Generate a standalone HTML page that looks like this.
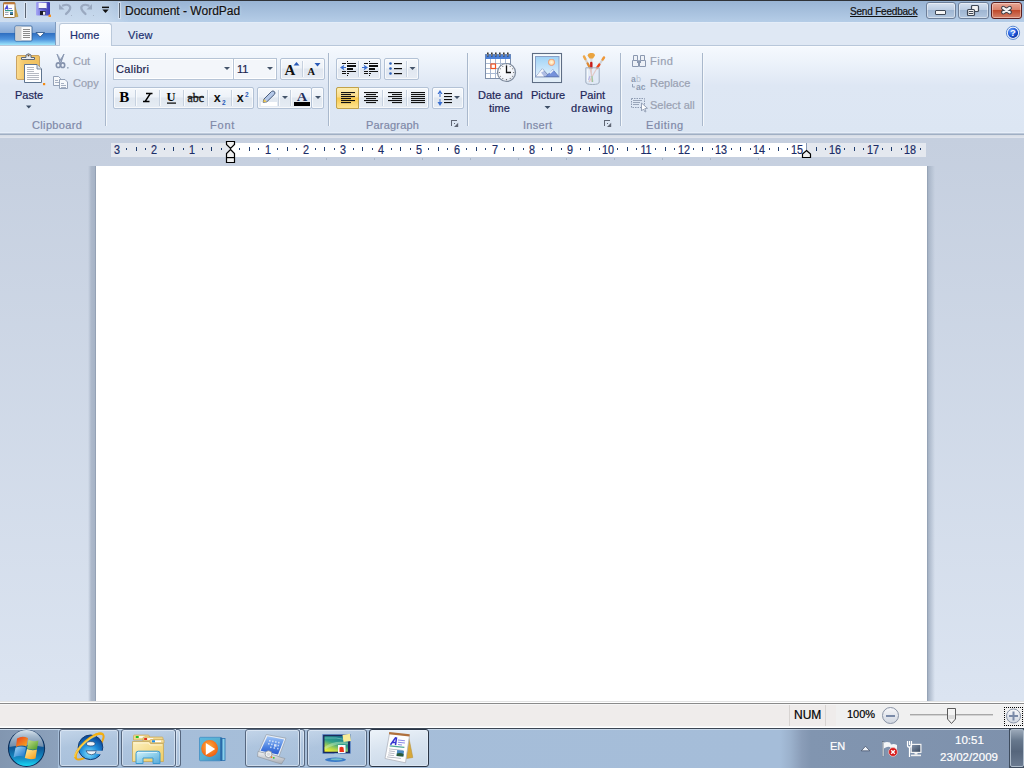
<!DOCTYPE html>
<html><head><meta charset="utf-8">
<style>
*{margin:0;padding:0;box-sizing:border-box}
html,body{width:1024px;height:768px;overflow:hidden;background:#c5cfdf;font-family:"Liberation Sans",sans-serif;font-size:11px;color:#1d2658}
.a{position:absolute}
svg{position:absolute;overflow:visible}
.t{position:absolute;white-space:pre;line-height:13px;-webkit-text-stroke:.2px currentColor}
#title{left:0;top:0;width:1024px;height:22px;background:linear-gradient(#99b4d4,#b5cde7);border-top:1px solid #2f3237}
#qat{left:0;top:1px;width:130px;height:21px;background:linear-gradient(90deg,rgba(215,228,243,.75) 0%,rgba(215,228,243,.55) 80%,rgba(215,228,243,0) 100%)}
#tabs{left:0;top:22px;width:1024px;height:24px;background:#dfe8f4;border-top:1px solid #e4edf8;border-bottom:1px solid #b8c7da}
#ribbon{left:0;top:46px;width:1024px;height:87px;background:linear-gradient(#ffffff 0px,#f5f9fe 1px,#e9f0f9 22px,#dee7f4 40px,#dce6f3 100%)}
#rb1{left:0;top:132px;width:1024px;height:1px;background:#e6eef9}
#rb2{left:0;top:133px;width:1024px;height:1px;background:#bcc8d9}
#rb3{left:0;top:134px;width:1024px;height:1px;background:#a0afc4}
#rsep{left:0;top:135px;width:1024px;height:3px;background:linear-gradient(#d5dbe4,#e1e6ef)}
#docbg{left:0;top:138px;width:1024px;height:563px;background:linear-gradient(#c5cfdf,#dbe4f1)}
#ruler{left:111px;top:143px;width:815px;height:14px;background:#e4e8ef}
#rwhite{left:230px;top:143px;width:576px;height:14px;background:#fff}
#page{left:96px;top:166px;width:831px;height:535px;background:#fff}
#shl{left:88px;top:166px;width:8px;height:535px;background:linear-gradient(90deg,rgba(160,175,195,0),#adb9cb 40%,#a6b3c6 85%,#8794a7)}
#shr{left:927px;top:166px;width:8px;height:535px;background:linear-gradient(90deg,#8d9bae,#a9b6c8 20%,rgba(160,175,195,0))}
#status{left:0;top:701px;width:1024px;height:28px;background:#efeceb}
#task{left:0;top:729px;width:1024px;height:39px;background:linear-gradient(90deg,#a5bdd8 0%,#a5bdd8 75%,#7e95b1 84%,#7a91ad 100%)}
.sep{position:absolute;width:1px;background:#a9b8cc;box-shadow:1px 0 0 #f4f8fc}
.lbl{color:#7f89a8}
.dis{color:#9aa1b2}
.grp{position:absolute;border:1px solid #b3c2d6;border-radius:2px;background:linear-gradient(#f5f8fc 0%,#edf2f8 45%,#e0e7f0 50%,#e6ecf4 100%);box-shadow:inset 0 0 0 1px rgba(255,255,255,.65)}
.cb{position:absolute;border:1px solid #b6c4d6;background:#f3f6fa}
.dv{position:absolute;top:2px;bottom:2px;width:1px;background:#c6d1df;box-shadow:1px 0 0 rgba(255,255,255,.7)}
.rn{width:30px;text-align:center;color:#1b2d68;font-size:12px;transform:scaleX(.9)}
.arr{position:absolute;width:0;height:0;border-left:3px solid transparent;border-right:3px solid transparent;border-top:3px solid #44546a}
</style></head><body>
<div id="title" class="a"></div>
<div id="qat" class="a"></div>
<!-- wordpad icon -->
<svg style="left:0;top:0" width="24" height="22">
 <path d="M14.5 5 L18 16.5 L14.5 17 Z" fill="#d6a840" stroke="#b08a30" stroke-width=".6"/>
 <rect x="3.5" y="2.5" width="11.5" height="15" rx="1" fill="#fff" stroke="#9a7a48"/>
 <rect x="3.5" y="2.5" width="11.5" height="1.8" fill="#c27a3c"/>
 <path d="M5 9.5 L7 6 L8 9.5 M5.5 8.3 H8" stroke="#4c4cd6" stroke-width="1.4" fill="none"/>
 <rect x="9" y="8" width="3" height="1" fill="#8a8ae0"/>
 <rect x="5" y="10" width="8" height="1.2" fill="#3a9a8a"/>
 <rect x="5" y="12" width="3.5" height="1" fill="#a0a4b8"/>
 <rect x="5" y="14" width="3.5" height="1" fill="#a0a4b8"/>
 <rect x="10" y="12" width="3" height="3" fill="#3f7fb0"/>
 <rect x="10" y="14" width="3" height="1" fill="#2f4f40"/>
</svg>
<div class="a" style="left:25px;top:3px;width:1px;height:15px;background:#5a6472;box-shadow:0 0 1px 1px rgba(235,242,250,.6)"></div>
<!-- save -->
<svg style="left:0;top:0" width="60" height="22">
 <defs><linearGradient id="sv" x1="0" x2="1"><stop offset="0" stop-color="#a8a8f4"/><stop offset=".5" stop-color="#6666d8"/><stop offset="1" stop-color="#3c3cb4"/></linearGradient></defs>
 <rect x="36" y="2" width="14" height="13.6" rx="1" fill="url(#sv)"/>
 <rect x="38.6" y="2.8" width="8" height="6" fill="#f4f6fa"/>
 <rect x="38.6" y="8.2" width="8" height="1" fill="#3838a0"/>
 <rect x="40" y="11" width="5.5" height="4" fill="#1a1a2a"/>
 <rect x="43" y="11.8" width="2.2" height="3" fill="#f0f0f0"/>
 <rect x="48.5" y="14.5" width="2.5" height="2.5" rx=".6" fill="#f39020"/>
</svg>
<!-- undo / redo -->
<svg style="left:0;top:0" width="100" height="22">
 <g fill="none" stroke="#9aa9c0" stroke-width="2.2" stroke-linecap="round">
  <path d="M63 5.5 C68 3.5 71 6 70 9 C69 11.5 67 13 66 14"/>
  <path d="M88.5 5.5 C83.5 3.5 80.5 6 81.5 9 C82.5 11.5 84.5 13 85.5 14"/>
 </g>
 <path d="M59 4 L59 9.5 L64.5 9.5 Z" fill="#9aa9c0"/>
 <path d="M92 4 L92 9.5 L86.5 9.5 Z" fill="#9aa9c0"/>
 <rect x="71" y="15" width="1" height="1" fill="#a8b6c8"/>
 <rect x="93" y="15" width="1" height="1" fill="#a8b6c8"/>
</svg>
<svg style="left:100px;top:0" width="12" height="22">
 <rect x="2" y="6.6" width="7" height="1.5" fill="#111"/>
 <path d="M2.3 9.6 H8.7 L5.5 13 Z" fill="#111"/>
</svg>
<div class="a" style="left:119px;top:3px;width:1px;height:15px;background:#5a6472;box-shadow:0 0 1px 1px rgba(235,242,250,.6)"></div>
<div class="t" style="left:125px;top:4px;font-size:12px;line-height:14px;color:#111;text-shadow:0 0 3px rgba(235,242,250,.8)">Document - WordPad</div>
<div class="t" style="left:850px;top:5px;font-size:10px;color:#111;letter-spacing:-.2px;text-decoration:underline">Send Feedback</div>
<!-- window buttons -->
<div class="a" style="left:926px;top:2px;width:30px;height:17px;border:1px solid #6d7f99;border-radius:3px;background:linear-gradient(#d5e1f0 0%,#bccde3 45%,#9fb6d2 50%,#b3c7df 100%);box-shadow:inset 0 0 0 1px rgba(255,255,255,.45)"></div>
<div class="a" style="left:935px;top:10px;width:11px;height:5px;background:#f4f4f4;border:1px solid #3f4856;border-radius:1px"></div>
<div class="a" style="left:958px;top:2px;width:31px;height:17px;border:1px solid #6d7f99;border-radius:3px;background:linear-gradient(#d5e1f0 0%,#bccde3 45%,#9fb6d2 50%,#b3c7df 100%);box-shadow:inset 0 0 0 1px rgba(255,255,255,.45)"></div>
<svg style="left:966px;top:4px" width="16" height="14">
 <rect x="5.5" y="1.5" width="7" height="6" rx="1" fill="#f2f2f2" stroke="#3f4856" stroke-width="1.2"/>
 <rect x="1.5" y="5.5" width="7" height="6" rx="1" fill="#f2f2f2" stroke="#3f4856" stroke-width="1.2"/>
 <rect x="3.3" y="7.5" width="3.4" height="2" fill="none" stroke="#3f4856" stroke-width="1"/>
</svg>
<div class="a" style="left:991px;top:2px;width:31px;height:17px;border:1px solid #5c1e1e;border-radius:3px;background:linear-gradient(#e8a796 0%,#d9826c 45%,#c04a2c 50%,#d4826a 100%);box-shadow:inset 0 0 0 1px rgba(255,230,220,.5)"></div>
<svg style="left:999px;top:4px" width="16" height="14">
 <path d="M4.3 4 L10.7 8.2 M10.7 4 L4.3 8.2" stroke="#3b3e48" stroke-width="4.4" stroke-linecap="round"/>
 <path d="M4.3 4 L10.7 8.2 M10.7 4 L4.3 8.2" stroke="#f4f4f4" stroke-width="2.4" stroke-linecap="round"/>
</svg>

<div id="tabs" class="a"></div>
<!-- app button -->
<div class="a" style="left:0;top:22px;width:56px;height:23px;border-right:1px solid #7f9cc0;background:linear-gradient(#b0cbec 0%,#86a9d6 48%,#3070c2 50%,#4d93de 75%,#9ee6fb 100%)"></div>
<svg style="left:0;top:20px" width="56" height="26">
 <rect x="15" y="6" width="17" height="15" rx="1" fill="#fafafa" stroke="#2a5890" stroke-width=".8"/>
 <rect x="15.5" y="6.5" width="6" height="14" fill="#d0d0d0"/>
 <g fill="#8a8a8a"><rect x="23" y="9" width="7" height="1"/><rect x="23" y="11" width="7" height="1"/><rect x="23" y="13" width="7" height="1"/><rect x="23" y="15" width="7" height="1"/><rect x="23" y="17" width="7" height="1"/></g>
 <path d="M36 12.5 H44.5 L40.2 17 Z" fill="#fff" stroke="#1f4a80" stroke-width=".8"/>
</svg>
<!-- home tab -->
<div class="a" style="left:59px;top:23px;width:53px;height:24px;border:1px solid #bac9db;border-bottom:none;border-radius:3px 3px 0 0;background:linear-gradient(#fdfeff,#f5f9fe)"></div>
<div class="t" style="left:70px;top:29px;color:#1e3272">Home</div>
<div class="t" style="left:128px;top:29px;color:#1e3272;letter-spacing:.3px">View</div>
<!-- help -->
<svg style="left:1004px;top:24px" width="18" height="18">
 <defs><radialGradient id="hp" cx=".35" cy=".3" r=".8"><stop offset="0" stop-color="#6aa0ff"/><stop offset=".6" stop-color="#1a55d8"/><stop offset="1" stop-color="#0a2a90"/></radialGradient></defs>
 <circle cx="9" cy="8.8" r="6.6" fill="#f4f8fd" stroke="#5a88d0" stroke-width="1"/>
 <circle cx="9" cy="8.8" r="5.1" fill="url(#hp)"/>
 <text x="9" y="12.3" font-family="Liberation Sans" font-weight="bold" font-size="9.5" fill="#fff" text-anchor="middle">?</text>
</svg>
<div id="ribbon" class="a"></div>
<div id="rb1" class="a"></div><div id="rb2" class="a"></div><div id="rb3" class="a"></div>
<div id="rsep" class="a"></div>

<!-- ===== clipboard ===== -->
<svg style="left:0;top:0" width="110" height="134">
 <defs>
  <linearGradient id="brd" x1="0" x2="1"><stop offset="0" stop-color="#fbdc92"/><stop offset=".3" stop-color="#f4c96c"/><stop offset="1" stop-color="#efc060"/></linearGradient>
 </defs>
 <rect x="16.5" y="55.5" width="23" height="24" rx="1.5" fill="url(#brd)" stroke="#c9a364"/>
 <path d="M21.5 59.5 V57.5 H26 V55 Q28.5 52.5 31 55 V57.5 H34.5 V59.5 Z" fill="#e8ecf2" stroke="#5c6878" stroke-width="1"/>
 <circle cx="28.5" cy="55.5" r="1" fill="#6a5030"/>
 <path d="M24.5 64.5 H37 L41.5 69 V82.5 H24.5 Z" fill="#fff" stroke="#5f7590"/>
 <path d="M37 64.5 V69 H41.5" fill="#dfe6ef" stroke="#5f7590" stroke-width=".8"/>
 <g fill="#b6bac2"><rect x="27" y="67" width="7" height="1"/><rect x="27" y="69" width="7" height="1"/><rect x="27" y="71" width="7" height="1"/><rect x="27" y="73" width="12" height="1"/><rect x="27" y="75" width="12" height="1"/><rect x="27" y="77" width="12" height="1"/><rect x="27" y="79" width="12" height="1"/></g>
 <rect x="43" y="83" width="2.2" height="2.2" fill="#f38a12"/>
 <path d="M26 105.5 H31.5 L28.75 108.5 Z" fill="#3d4e66"/>
 <!-- scissors -->
 <path d="M57 54 L61.5 61.5 L60 62.5 Z M64 54 L59.5 61.5 L61 62.5 Z" fill="#8a98b2" stroke="#8a98b2" stroke-width="1"/>
 <path d="M58 54.5 L60.5 59" stroke="#c4cedc" stroke-width=".8"/>
 <g fill="none" stroke="#8593ad" stroke-width="1.6">
  <ellipse cx="58.3" cy="65.2" rx="2" ry="2.3"/>
  <ellipse cx="62.7" cy="65.2" rx="2" ry="2.3"/>
 </g>
 <rect x="67" y="67" width="1.6" height="1.6" fill="#a0aec2"/>
 <!-- copy -->
 <g stroke="#8a98b0" stroke-width=".9">
  <path d="M53.5 76.5 H58.5 L60.5 78.5 V85.5 H53.5 Z" fill="#f6f8fb"/>
  <path d="M59.5 79.5 H65 L67.5 82 V88.5 H59.5 Z" fill="#f6f8fb"/>
 </g>
 <g fill="#a6b0c2"><rect x="55" y="80" width="3" height="1"/><rect x="55" y="82" width="4" height="1"/><rect x="61" y="83" width="3" height="1"/><rect x="61" y="85" width="5" height="1"/><rect x="61" y="87" width="5" height="1"/></g>
</svg>
<div class="t" style="left:15px;top:89px">Paste</div>
<div class="t dis" style="left:73px;top:55px">Cut</div>
<div class="t dis" style="left:73px;top:77px">Copy</div>
<div class="t lbl" style="left:32px;top:119px;letter-spacing:.35px">Clipboard</div>
<div class="sep" style="left:105px;top:53px;height:73px"></div>

<!-- ===== font ===== -->
<div class="cb" style="left:113px;top:58px;width:121px;height:22px;box-shadow:inset 0 0 0 1px #fff"></div>
<div class="cb" style="left:233px;top:58px;width:44px;height:22px;box-shadow:inset 0 0 0 1px #fff"></div>
<div class="t" style="left:116px;top:63px;color:#1b2550;letter-spacing:.3px">Calibri</div>
<div class="t" style="left:237px;top:63px;color:#1b2550">11</div>
<div class="arr" style="left:223.5px;top:67px"></div>
<div class="arr" style="left:266.5px;top:67px"></div>
<div class="grp" style="left:280px;top:58px;width:45px;height:22px"><div class="dv" style="left:21px"></div></div>
<svg style="left:0;top:0" width="330" height="134">
 <text x="284.5" y="75" font-family="Liberation Serif" font-weight="bold" font-size="15" fill="#111">A</text>
 <path d="M293.5 65.5 L296.5 62 L299.5 65.5 Z" fill="#2a5ab8"/>
 <text x="307.5" y="75" font-family="Liberation Serif" font-weight="bold" font-size="10.5" fill="#111">A</text>
 <path d="M314.5 63 L320.5 63 L317.5 66.5 Z" fill="#2a5ab8"/>
</svg>
<div class="grp" style="left:113px;top:87px;width:141px;height:22px">
 <div class="dv" style="left:21px"></div><div class="dv" style="left:45px"></div><div class="dv" style="left:69px"></div><div class="dv" style="left:93px"></div><div class="dv" style="left:117px"></div>
</div>
<svg style="left:0;top:0" width="330" height="134">
 <text x="119.3" y="102.3" font-family="Liberation Serif" font-weight="bold" font-size="14.5" fill="#000" textLength="10" lengthAdjust="spacingAndGlyphs">B</text>
 <path d="M146 93.6 H152.5 M143 101.4 H149.5 M150.3 93.6 L145.2 101.4" stroke="#000" stroke-width="1.5" fill="none"/>
 <text x="166.5" y="101" font-family="Liberation Serif" font-weight="bold" font-size="12.5" fill="#000">U</text>
 <rect x="167" y="102.5" width="9" height="1.2" fill="#000"/>
 <text x="187.5" y="101.5" font-family="Liberation Serif" font-size="12.5" fill="#222" stroke="#222" stroke-width=".35" textLength="16.5" lengthAdjust="spacingAndGlyphs">abc</text>
 <rect x="187.5" y="96.6" width="16.5" height="1.1" fill="#111"/>
 <text x="213.8" y="102.2" font-family="Liberation Sans" font-weight="bold" font-size="12.5" fill="#111">x</text>
 <text x="222" y="104.5" font-family="Liberation Sans" font-weight="bold" font-size="6.5" fill="#2a5ab8">2</text>
 <text x="236.8" y="102.2" font-family="Liberation Sans" font-weight="bold" font-size="12.5" fill="#111">x</text>
 <text x="245" y="96.5" font-family="Liberation Sans" font-weight="bold" font-size="6.5" fill="#2a5ab8">2</text>
</svg>
<div class="grp" style="left:257px;top:87px;width:55px;height:22px"><div class="dv" style="left:20px"></div><div class="dv" style="left:32px"></div></div>
<div class="grp" style="left:311px;top:87px;width:13px;height:22px"></div>
<svg style="left:0;top:0" width="330" height="134">
 <rect x="261" y="102" width="16" height="4" fill="#fff"/>
 <path d="M264 99 L271.5 91.5 Q273 90.3 274.4 91.6 Q275.7 93 274.4 94.4 L266.8 101.8 L263.2 102.3 Z" fill="#b4c8e8" stroke="#4a5d7c" stroke-width="1"/>
 <path d="M264 99 L266.8 101.8 L263.2 102.3 Z" fill="#f0c850"/>
 <path d="M282 96 H288 L285 99 Z" fill="#44546a"/>
 <text x="296.8" y="100.6" font-family="Liberation Serif" font-weight="bold" font-size="13.5" fill="#22305e" textLength="10.5" lengthAdjust="spacingAndGlyphs">A</text>
 <rect x="294" y="102" width="16" height="4" fill="#000"/>
 <path d="M315 96 H321 L318 99 Z" fill="#44546a"/>
</svg>
<div class="t lbl" style="left:210px;top:119px;letter-spacing:.8px">Font</div>
<div class="sep" style="left:328px;top:53px;height:73px"></div>

<!-- ===== paragraph ===== -->
<div class="grp" style="left:336px;top:58px;width:45px;height:22px"><div class="dv" style="left:21px"></div></div>
<div class="grp" style="left:384px;top:58px;width:35px;height:22px"><div class="dv" style="left:21px"></div></div>
<div class="grp" style="left:336px;top:87px;width:93px;height:22px"><div class="dv" style="left:45px"></div><div class="dv" style="left:69px"></div></div>
<div class="a" style="left:336px;top:87px;width:23px;height:22px;border:1px solid #c2a24a;border-radius:2px 0 0 2px;background:linear-gradient(#fdeeb3 0%,#fbdb86 45%,#f9c94a 50%,#fde493 100%)"></div>
<div class="grp" style="left:432px;top:87px;width:32px;height:22px"></div>
<svg style="left:0;top:0" width="470" height="134">
 <g fill="#111">
  <!-- decrease indent -->
  <rect x="342" y="63" width="4" height="1"/><rect x="347" y="63" width="9" height="1"/>
  <rect x="347" y="65" width="9" height="2"/>
  <rect x="347" y="68" width="6" height="2"/>
  <rect x="342" y="71" width="4" height="1"/><rect x="347" y="71" width="9" height="1"/>
  <rect x="342" y="73" width="4" height="1"/><rect x="347" y="73" width="2" height="1"/>
  <rect x="347" y="61" width="1" height="1"/><rect x="347" y="75" width="1" height="1"/>
  <!-- increase indent -->
  <rect x="364" y="63" width="4" height="1"/><rect x="369" y="63" width="9" height="1"/>
  <rect x="369" y="65" width="9" height="2"/>
  <rect x="369" y="68" width="6" height="2"/>
  <rect x="364" y="71" width="4" height="1"/><rect x="369" y="71" width="9" height="1"/>
  <rect x="364" y="73" width="4" height="1"/><rect x="369" y="73" width="2" height="1"/>
  <rect x="369" y="61" width="1" height="1"/><rect x="369" y="75" width="1" height="1"/>
 </g>
 <path d="M340 67.5 L344.5 64.5 L343.5 67 H346 V68 H343.5 L344.5 70.5 Z" fill="#3a6ed0"/>
 <path d="M368 67.5 L363.5 64.5 L364.5 67 H362 V68 H364.5 L363.5 70.5 Z" fill="#3a6ed0"/>
 <g fill="#2b5fb8"><circle cx="390.5" cy="63.5" r="1.3"/><circle cx="390.5" cy="68.5" r="1.3"/><circle cx="390.5" cy="73.5" r="1.3"/></g>
 <g fill="#111"><rect x="394" y="63" width="8" height="1.2"/><rect x="394" y="68" width="8" height="1.2"/><rect x="394" y="73" width="8" height="1.2"/></g>
 <path d="M409.5 67 H415.5 L412.5 70 Z" fill="#44546a"/>
 <!-- align -->
 <g fill="#111">
  <rect x="341" y="92" width="14" height="1.1"/><rect x="341" y="94" width="10" height="1.1"/><rect x="341" y="96" width="14" height="1.1"/><rect x="341" y="98" width="10" height="1.1"/><rect x="341" y="100" width="14" height="1.1"/><rect x="341" y="102" width="10" height="1.1"/>
  <rect x="364" y="92" width="14" height="1.1"/><rect x="366" y="94" width="10" height="1.1"/><rect x="364" y="96" width="14" height="1.1"/><rect x="366" y="98" width="10" height="1.1"/><rect x="364" y="100" width="14" height="1.1"/><rect x="366" y="102" width="10" height="1.1"/>
  <rect x="388" y="92" width="14" height="1.1"/><rect x="392" y="94" width="10" height="1.1"/><rect x="388" y="96" width="14" height="1.1"/><rect x="392" y="98" width="10" height="1.1"/><rect x="388" y="100" width="14" height="1.1"/><rect x="392" y="102" width="10" height="1.1"/>
  <rect x="411" y="92" width="14" height="1.1"/><rect x="411" y="94" width="14" height="1.1"/><rect x="411" y="96" width="14" height="1.1"/><rect x="411" y="98" width="14" height="1.1"/><rect x="411" y="100" width="14" height="1.1"/><rect x="411" y="102" width="14" height="1.1"/>
  <rect x="444" y="93" width="8" height="1.1"/><rect x="444" y="96" width="8" height="1.1"/><rect x="444" y="99" width="8" height="1.1"/><rect x="444" y="102" width="8" height="1.1"/>
 </g>
 <path d="M440 90 L437.5 94 H442.5 Z M439.5 93 H440.5 V97 H439.5 Z M440 106 L437.5 102 H442.5 Z M439.5 99 H440.5 V103 H439.5 Z" fill="#3a6fd0"/>
 <path d="M454 96 H460 L457 99 Z" fill="#44546a"/>
 <!-- launcher -->
 <g fill="#5f6674"><rect x="451" y="120" width="6" height="1"/><rect x="451" y="120" width="1" height="6"/><path d="M458.2 122.8 V127 H454 Z"/><rect x="454" y="123" width="1" height="1"/></g>
</svg>
<div class="t lbl" style="left:366px;top:119px;letter-spacing:.2px">Paragraph</div>
<div class="sep" style="left:467px;top:53px;height:73px"></div>
<!-- ===== insert ===== -->
<svg style="left:0;top:0" width="710" height="134">
 <defs>
  <linearGradient id="sky" x1="0" y1="0" x2="0" y2="1"><stop offset="0" stop-color="#9fd2f6"/><stop offset="1" stop-color="#e4f2fd"/></linearGradient>
  <radialGradient id="clk" cx=".4" cy=".35" r=".7"><stop offset="0" stop-color="#ffffff"/><stop offset=".7" stop-color="#f0f3f8"/><stop offset="1" stop-color="#d4dbe6"/></radialGradient>
  <radialGradient id="sun" cx=".5" cy=".5" r=".5"><stop offset="0" stop-color="#fffbe8"/><stop offset=".6" stop-color="#ffe0b0"/><stop offset="1" stop-color="#f08a60"/></radialGradient>
 </defs>
 <!-- calendar -->
 <rect x="485.5" y="54.5" width="25" height="24" fill="#fff" stroke="#7d8ea8"/>
 <rect x="485.5" y="54.5" width="25" height="4.5" fill="#4a80d8"/>
 <g fill="#a9b9d2">
  <rect x="486" y="63" width="24" height="1"/><rect x="486" y="68" width="24" height="1"/><rect x="486" y="73" width="24" height="1"/>
  <rect x="490" y="59" width="1" height="19"/><rect x="495" y="59" width="1" height="19"/><rect x="500" y="59" width="1" height="19"/><rect x="505" y="59" width="1" height="19"/>
 </g>
 <g fill="#333" ><rect x="487" y="52.5" width="1.6" height="4"/><rect x="491" y="52.5" width="1.6" height="4"/><rect x="495" y="52.5" width="1.6" height="4"/><rect x="499" y="52.5" width="1.6" height="4"/><rect x="503" y="52.5" width="1.6" height="4"/><rect x="507" y="52.5" width="1.6" height="4"/></g>
 <g fill="#eee"><rect x="487.6" y="54" width=".6" height="2"/><rect x="491.6" y="54" width=".6" height="2"/><rect x="495.6" y="54" width=".6" height="2"/><rect x="499.6" y="54" width=".6" height="2"/><rect x="503.6" y="54" width=".6" height="2"/><rect x="507.6" y="54" width=".6" height="2"/></g>
 <rect x="491" y="64" width="4.5" height="4.5" fill="none" stroke="#f05222" stroke-width="1.2"/>
 <circle cx="506.5" cy="72.5" r="9" fill="url(#clk)" stroke="#7d8a9c" stroke-width="1.2"/>
 <path d="M506.5 65.5 V72.5 H511" fill="none" stroke="#111" stroke-width="1.3"/>
 <g fill="#555"><circle cx="506.5" cy="65" r=".6"/><circle cx="506.5" cy="79.7" r=".6"/><circle cx="499.3" cy="72.5" r=".6"/><circle cx="513.7" cy="72.5" r=".6"/><circle cx="502.8" cy="66.4" r=".5"/><circle cx="510.2" cy="66.4" r=".5"/><circle cx="502.8" cy="78.6" r=".5"/><circle cx="510.2" cy="78.6" r=".5"/><circle cx="500.3" cy="68.8" r=".5"/><circle cx="512.7" cy="68.8" r=".5"/><circle cx="500.3" cy="76.2" r=".5"/><circle cx="512.7" cy="76.2" r=".5"/></g>
 <!-- picture -->
 <rect x="532.5" y="53.5" width="29" height="29" fill="#f6fbfe" stroke="#5e6d84" stroke-width="1.1"/>
 <rect x="533.5" y="77" width="27" height="5" fill="#e2eef8"/>
 <rect x="535.5" y="56.5" width="23.5" height="20.5" fill="url(#sky)" stroke="#8aa0c6"/>
 <circle cx="551.5" cy="62.3" r="3.4" fill="url(#sun)"/>
 <path d="M536 76.5 L542.3 68.8 L549.5 76.5 Z" fill="#aebde4" stroke="#6d80aa" stroke-width=".8"/>
 <path d="M536 76.5 L542.3 68.8 L544 71 L541 72.5 L544 76.5 Z" fill="#f4f6fc"/>
 <path d="M546 76.5 L552.8 69.6 L558.7 76.5 Z" fill="#7592dc" stroke="#5a74b8" stroke-width=".8"/>
 <path d="M549 72.5 L552.8 69.6 L553.8 70.6 L550.5 73.8 Z" fill="#e8f0fc"/>
 <!-- paint -->
 <g stroke-linecap="round">
  <path d="M584 56.5 L590 68" stroke="#d8d0c8" stroke-width="2.2"/>
  <path d="M584 56.5 L585.3 59" stroke="#f0a848" stroke-width="2.4"/>
  <path d="M587.6 63.5 L590 68" stroke="#e08830" stroke-width="2.2"/>
  <path d="M591.3 58 V68" stroke="#d8dade" stroke-width="2.2"/>
  <path d="M591.3 63 V68" stroke="#c81818" stroke-width="2.4"/>
  <path d="M604 57.5 L597 68" stroke="#d0d2d6" stroke-width="2.2"/>
  <path d="M604 57.5 L602.6 59.6" stroke="#f09838" stroke-width="2.4"/>
  <path d="M599.3 64.6 L597 68" stroke="#f04418" stroke-width="2.4"/>
 </g>
 <path d="M587.5 55.5 Q588 52.5 591.3 53 Q594.8 52.5 595 55.5 L593 58.5 H589.5 Z" fill="#eaa440"/>
 <path d="M597 68 L589 82 M590 68 L593 82 M591.3 68 L591.5 82" stroke="#e09880" stroke-width="1.2" opacity=".75"/>
 <path d="M588.5 80 L590 76" stroke="#9a88d8" stroke-width="1.2"/>
 <path d="M592 76 L592.5 82" stroke="#50b050" stroke-width="1"/>
 <path d="M585.8 67.8 H599.2 V82 Q599.2 84.5 592.5 84.5 Q585.8 84.5 585.8 82 Z" fill="rgba(225,236,248,.45)" stroke="#a0aec0" stroke-width="1"/>
 <path d="M587.5 69.5 V81" stroke="#fff" stroke-width="1" opacity=".7"/>
 <g fill="#5f6674"><rect x="604" y="120" width="6" height="1"/><rect x="604" y="120" width="1" height="6"/><path d="M611.2 122.8 V127 H607 Z"/><rect x="607" y="123" width="1" height="1"/></g>
 <path d="M544.5 106 H550.5 L547.5 109 Z" fill="#3d4e66"/>
 <!-- editing -->
 <g fill="#edf1f7" stroke="#8a98b0" stroke-width="1">
  <path d="M632.5 60.5 H638.5 V66.5 H632.5 Z"/><path d="M639.5 60.5 H645.5 V66.5 H639.5 Z"/>
  <path d="M633.5 55.5 H637.5 V60.5 H633.5 Z"/><path d="M640.5 55.5 H644.5 V60.5 H640.5 Z"/>
 </g>
 <rect x="637" y="61" width="4" height="2" fill="#8a98b0"/>
 <text x="631" y="82" font-family="Liberation Sans" font-weight="bold" font-size="8.5" fill="#8d9bb2">a</text>
 <text x="636" y="82" font-family="Liberation Sans" font-size="9" fill="#b6c0cf">b</text>
 <text x="636" y="90" font-family="Liberation Sans" font-weight="bold" font-size="8.5" fill="#8d9bb2">ac</text>
 <path d="M632.5 84 V87 H635" fill="none" stroke="#8d9bb2" stroke-width=".9"/>
 <rect x="631.5" y="98.5" width="13" height="9" fill="none" stroke="#8d9bb2" stroke-dasharray="1.5 1"/>
 <g fill="#9aa6ba"><rect x="633" y="100" width="9" height="1"/><rect x="633" y="102" width="7" height="1"/><rect x="633" y="104" width="6" height="1"/></g>
 <path d="M641.5 103 L641.5 111 L643.5 109 L645 112 L646 111.5 L644.8 108.6 L647.5 108.3 Z" fill="#fff" stroke="#8d9bb2" stroke-width=".9"/>
</svg>
<div class="t" style="left:478px;top:89px">Date and</div>
<div class="t" style="left:489px;top:102px">time</div>
<div class="t" style="left:531px;top:89px">Picture</div>
<div class="t" style="left:580px;top:89px">Paint</div>
<div class="t" style="left:571px;top:102px;letter-spacing:.5px">drawing</div>
<div class="t lbl" style="left:523px;top:119px;letter-spacing:.3px">Insert</div>
<div class="sep" style="left:620px;top:53px;height:73px"></div>
<div class="t dis" style="left:650px;top:55px;letter-spacing:.5px">Find</div>
<div class="t dis" style="left:650px;top:77px">Replace</div>
<div class="t dis" style="left:650px;top:99px">Select all</div>
<div class="t lbl" style="left:646px;top:119px;letter-spacing:.6px">Editing</div>
<div class="sep" style="left:702px;top:53px;height:73px"></div>
<div id="docbg" class="a"></div>
<div id="ruler" class="a"></div>
<div id="rwhite" class="a"></div>
<div class="t rn" style="left:101.61px;top:144px">3</div>
<div class="t rn" style="left:139.41px;top:144px">2</div>
<div class="t rn" style="left:177.20px;top:144px">1</div>
<div class="t rn" style="left:252.80px;top:144px">1</div>
<div class="t rn" style="left:290.59px;top:144px">2</div>
<div class="t rn" style="left:328.39px;top:144px">3</div>
<div class="t rn" style="left:366.18px;top:144px">4</div>
<div class="t rn" style="left:403.98px;top:144px">5</div>
<div class="t rn" style="left:441.77px;top:144px">6</div>
<div class="t rn" style="left:479.57px;top:144px">7</div>
<div class="t rn" style="left:517.36px;top:144px">8</div>
<div class="t rn" style="left:555.16px;top:144px">9</div>
<div class="t rn" style="left:592.95px;top:144px">10</div>
<div class="t rn" style="left:630.75px;top:144px">11</div>
<div class="t rn" style="left:668.54px;top:144px">12</div>
<div class="t rn" style="left:706.34px;top:144px">13</div>
<div class="t rn" style="left:744.13px;top:144px">14</div>
<div class="t rn" style="left:781.93px;top:144px">15</div>
<div class="t rn" style="left:819.72px;top:144px">16</div>
<div class="t rn" style="left:857.52px;top:144px">17</div>
<div class="t rn" style="left:895.31px;top:144px">18</div>
<svg style="left:0;top:0" width="1024" height="170">
<rect x="126" y="148" width="1" height="2" fill="#1e3c6e"/>
<rect x="136" y="147" width="1" height="4" fill="#1e3c6e"/>
<rect x="145" y="148" width="1" height="2" fill="#1e3c6e"/>
<rect x="164" y="148" width="1" height="2" fill="#1e3c6e"/>
<rect x="173" y="147" width="1" height="4" fill="#1e3c6e"/>
<rect x="183" y="148" width="1" height="2" fill="#1e3c6e"/>
<rect x="202" y="148" width="1" height="2" fill="#1e3c6e"/>
<rect x="211" y="147" width="1" height="4" fill="#1e3c6e"/>
<rect x="221" y="148" width="1" height="2" fill="#1e3c6e"/>
<rect x="239" y="148" width="1" height="2" fill="#1e3c6e"/>
<rect x="249" y="147" width="1" height="4" fill="#1e3c6e"/>
<rect x="258" y="148" width="1" height="2" fill="#1e3c6e"/>
<rect x="277" y="148" width="1" height="2" fill="#1e3c6e"/>
<rect x="287" y="147" width="1" height="4" fill="#1e3c6e"/>
<rect x="296" y="148" width="1" height="2" fill="#1e3c6e"/>
<rect x="315" y="148" width="1" height="2" fill="#1e3c6e"/>
<rect x="324" y="147" width="1" height="4" fill="#1e3c6e"/>
<rect x="334" y="148" width="1" height="2" fill="#1e3c6e"/>
<rect x="353" y="148" width="1" height="2" fill="#1e3c6e"/>
<rect x="362" y="147" width="1" height="4" fill="#1e3c6e"/>
<rect x="372" y="148" width="1" height="2" fill="#1e3c6e"/>
<rect x="391" y="148" width="1" height="2" fill="#1e3c6e"/>
<rect x="400" y="147" width="1" height="4" fill="#1e3c6e"/>
<rect x="410" y="148" width="1" height="2" fill="#1e3c6e"/>
<rect x="428" y="148" width="1" height="2" fill="#1e3c6e"/>
<rect x="438" y="147" width="1" height="4" fill="#1e3c6e"/>
<rect x="447" y="148" width="1" height="2" fill="#1e3c6e"/>
<rect x="466" y="148" width="1" height="2" fill="#1e3c6e"/>
<rect x="476" y="147" width="1" height="4" fill="#1e3c6e"/>
<rect x="485" y="148" width="1" height="2" fill="#1e3c6e"/>
<rect x="504" y="148" width="1" height="2" fill="#1e3c6e"/>
<rect x="513" y="147" width="1" height="4" fill="#1e3c6e"/>
<rect x="523" y="148" width="1" height="2" fill="#1e3c6e"/>
<rect x="542" y="148" width="1" height="2" fill="#1e3c6e"/>
<rect x="551" y="147" width="1" height="4" fill="#1e3c6e"/>
<rect x="561" y="148" width="1" height="2" fill="#1e3c6e"/>
<rect x="580" y="148" width="1" height="2" fill="#1e3c6e"/>
<rect x="589" y="147" width="1" height="4" fill="#1e3c6e"/>
<rect x="599" y="148" width="1" height="2" fill="#1e3c6e"/>
<rect x="617" y="148" width="1" height="2" fill="#1e3c6e"/>
<rect x="627" y="147" width="1" height="4" fill="#1e3c6e"/>
<rect x="636" y="148" width="1" height="2" fill="#1e3c6e"/>
<rect x="655" y="148" width="1" height="2" fill="#1e3c6e"/>
<rect x="665" y="147" width="1" height="4" fill="#1e3c6e"/>
<rect x="674" y="148" width="1" height="2" fill="#1e3c6e"/>
<rect x="693" y="148" width="1" height="2" fill="#1e3c6e"/>
<rect x="702" y="147" width="1" height="4" fill="#1e3c6e"/>
<rect x="712" y="148" width="1" height="2" fill="#1e3c6e"/>
<rect x="731" y="148" width="1" height="2" fill="#1e3c6e"/>
<rect x="740" y="147" width="1" height="4" fill="#1e3c6e"/>
<rect x="750" y="148" width="1" height="2" fill="#1e3c6e"/>
<rect x="769" y="148" width="1" height="2" fill="#1e3c6e"/>
<rect x="778" y="147" width="1" height="4" fill="#1e3c6e"/>
<rect x="787" y="148" width="1" height="2" fill="#1e3c6e"/>
<rect x="806" y="148" width="1" height="2" fill="#1e3c6e"/>
<rect x="816" y="147" width="1" height="4" fill="#1e3c6e"/>
<rect x="825" y="148" width="1" height="2" fill="#1e3c6e"/>
<rect x="844" y="148" width="1" height="2" fill="#1e3c6e"/>
<rect x="854" y="147" width="1" height="4" fill="#1e3c6e"/>
<rect x="863" y="148" width="1" height="2" fill="#1e3c6e"/>
<rect x="882" y="148" width="1" height="2" fill="#1e3c6e"/>
<rect x="891" y="147" width="1" height="4" fill="#1e3c6e"/>
<rect x="901" y="148" width="1" height="2" fill="#1e3c6e"/>
<rect x="920" y="148" width="1" height="2" fill="#1e3c6e"/>
<rect x="278" y="158" width="1" height="2" fill="#a9b6c8"/>
<rect x="326" y="158" width="1" height="2" fill="#a9b6c8"/>
<rect x="374" y="158" width="1" height="2" fill="#a9b6c8"/>
<rect x="422" y="158" width="1" height="2" fill="#a9b6c8"/>
<rect x="470" y="158" width="1" height="2" fill="#a9b6c8"/>
<rect x="518" y="158" width="1" height="2" fill="#a9b6c8"/>
<rect x="566" y="158" width="1" height="2" fill="#a9b6c8"/>
<rect x="614" y="158" width="1" height="2" fill="#a9b6c8"/>
<rect x="662" y="158" width="1" height="2" fill="#a9b6c8"/>
<rect x="710" y="158" width="1" height="2" fill="#a9b6c8"/>
<rect x="758" y="158" width="1" height="2" fill="#a9b6c8"/>
<path d="M226.5 141.5 H234.5 V144.5 L230.5 148.5 L226.5 144.5 Z" fill="#efefef" stroke="#000" stroke-width="1.2"/>
<path d="M230.5 149.5 L234.5 153.5 V162.5 H226.5 V153.5 Z" fill="#efefef" stroke="#000" stroke-width="1.2"/>
<rect x="226.5" y="157" width="8" height="1.2" fill="#000"/>
<rect x="806" y="143" width="1" height="7" fill="#8a9ab4"/>
<path d="M806.5 150.5 L810.5 154 V157.5 H802.5 V154 Z" fill="#efefef" stroke="#000" stroke-width="1.2"/>
</svg><div id="shl" class="a"></div>
<div id="shr" class="a"></div>
<div id="page" class="a"></div>

<!-- status bar -->
<div class="a" style="left:0;top:701px;width:1024px;height:1px;background:#e2e2e2"></div>
<div class="a" style="left:0;top:702px;width:1024px;height:1px;background:#fff"></div>
<div class="a" style="left:0;top:703px;width:1024px;height:1px;background:#8a8a8a"></div>
<div class="a" style="left:0;top:704px;width:1024px;height:1px;background:#f6f6f6"></div>
<div class="a" style="left:0;top:705px;width:1024px;height:21px;background:#efeceb"></div>
<div class="a" style="left:0;top:726px;width:1024px;height:1px;background:#f7f7f7"></div>
<div class="a" style="left:0;top:727px;width:1024px;height:1px;background:#fff"></div>
<div class="a" style="left:836px;top:705px;width:188px;height:21px;background:#f0f0f0"></div>
<div class="a" style="left:789px;top:705px;width:1px;height:21px;background:#d8d4d2"></div>
<div class="a" style="left:825px;top:705px;width:1px;height:21px;background:#d8d4d2"></div>
<div class="t" style="left:794px;top:708px;font-size:12px;line-height:14px;color:#000">NUM</div>
<div class="t" style="left:847px;top:708px;color:#000">100%</div>
<div class="a" style="left:1004px;top:707px;width:19px;height:19px;border:1px dotted #000"></div>
<svg style="left:0;top:0" width="1024" height="768">
 <defs><linearGradient id="zb" x1="0" y1="0" x2="0" y2="1"><stop offset="0" stop-color="#f8f8fa"/><stop offset="1" stop-color="#d0d6e0"/></linearGradient></defs>
 <circle cx="890.5" cy="715.5" r="8" fill="url(#zb)" stroke="#8a94a6" stroke-width="1"/>
 <rect x="886" y="715" width="9" height="2" fill="#7a8aa8"/>
 <rect x="910" y="714" width="83" height="2" fill="#d2d2d2"/>
 <rect x="910" y="714" width="83" height="1" fill="#a8a8a8"/>
 <path d="M947.5 708.5 H955.5 V719 L951.5 723.5 L947.5 719 Z" fill="#f4f4f4" stroke="#5a5a5a" stroke-width="1"/>
 <rect x="948.2" y="715" width="6.6" height="4" fill="#dcdcdc"/>
 <circle cx="1013.5" cy="716" r="7" fill="url(#zb)" stroke="#8a94a6" stroke-width="1"/>
 <rect x="1009" y="715" width="9" height="2" fill="#7a8aa8"/>
 <rect x="1012.5" y="711.5" width="2" height="9" fill="#7a8aa8"/>
</svg>

<!-- taskbar -->
<div class="a" style="left:0;top:728px;width:1024px;height:1px;background:#3c4654"></div>
<div class="a" style="left:0;top:729px;width:1024px;height:39px;background:linear-gradient(90deg,#a6bed9 0%,#a5bdd9 76.2%,#9bb1cc 77.2%,#8a9db8 78.3%,#8195b0 79.2%,#7e91ac 100%)"></div>
<div class="a" style="left:0;top:729px;width:1024px;height:1px;background:rgba(230,240,250,.55)"></div>
<div class="a" style="left:0;top:730px;width:58px;height:38px;background:linear-gradient(90deg,rgba(80,95,120,.42),rgba(80,95,120,.3))"></div>
<style>
.tb{position:absolute;top:729px;height:38px;border:1px solid #56677f;border-radius:3px;background:linear-gradient(170deg,rgba(220,232,246,.55) 0%,rgba(190,210,232,.35) 40%,rgba(170,195,222,.25) 100%);box-shadow:inset 0 0 0 1px rgba(235,243,252,.55)}
</style>
<div class="tb" style="left:59px;width:60px"></div>
<div class="tb" style="left:121px;width:55px"></div>
<div class="tb" style="left:176px;width:5px;border-left:none;border-radius:0 3px 3px 0"></div>
<div class="tb" style="left:245px;width:55px"></div>
<div class="tb" style="left:300px;width:5px;border-left:none;border-radius:0 3px 3px 0"></div>
<div class="tb" style="left:307px;width:60px"></div>
<div class="tb" style="left:369px;width:60px;background:linear-gradient(170deg,#edf3f9 0%,#d9e4f0 45%,#c9d8e8 100%);border-color:#2a3546"></div>
<div class="a" style="left:1009px;top:729px;width:15px;height:39px;background:#3e4c5e"></div><div class="a" style="left:1010px;top:729px;width:14px;height:38px;border:1px solid #aebccb;border-radius:2px;background:linear-gradient(#9aa8b8 0%,#66778c 30%,#56667c 60%,#6a7a90 100%)"></div>
<svg style="left:0;top:0" width="1024" height="768">
 <defs>
  <linearGradient id="orb2" x1="0" y1="0" x2="0" y2="1"><stop offset="0" stop-color="#1a4f86"/><stop offset=".5" stop-color="#0f5a98"/><stop offset=".8" stop-color="#1590c8"/><stop offset="1" stop-color="#18d8f4"/></linearGradient>
  <linearGradient id="orbtop" x1="0" y1="0" x2="0" y2="1"><stop offset="0" stop-color="#d8e4ee"/><stop offset=".35" stop-color="#a8bccf"/><stop offset="1" stop-color="#6f8aa8"/></linearGradient>
  <linearGradient id="fr" x1="0" y1="0" x2="1" y2="1"><stop offset="0" stop-color="#e83c20"/><stop offset="1" stop-color="#f8b020"/></linearGradient>
  <linearGradient id="fg" x1="0" y1="0" x2="1" y2="1"><stop offset="0" stop-color="#c8e090"/><stop offset="1" stop-color="#4a9a20"/></linearGradient>
  <linearGradient id="fb" x1="0" y1="0" x2="1" y2="1"><stop offset="0" stop-color="#a8daf8"/><stop offset="1" stop-color="#1070c8"/></linearGradient>
  <linearGradient id="fy" x1="0" y1="0" x2="1" y2="1"><stop offset="0" stop-color="#fff0a0"/><stop offset="1" stop-color="#f89810"/></linearGradient>
  <radialGradient id="ieg" cx=".45" cy=".75" r=".7"><stop offset="0" stop-color="#7fe0ff"/><stop offset=".55" stop-color="#1a88d8"/><stop offset="1" stop-color="#0c4898"/></radialGradient>
  <linearGradient id="fold" x1="0" y1="0" x2="1" y2="1"><stop offset="0" stop-color="#fcf0c0"/><stop offset="1" stop-color="#f0cc60"/></linearGradient>
  <linearGradient id="stand" x1="0" y1="0" x2="1" y2="1"><stop offset="0" stop-color="#d8f4fc"/><stop offset=".5" stop-color="#90d0ec"/><stop offset="1" stop-color="#58a8d8"/></linearGradient>
  <linearGradient id="scr" x1=".7" y1="0" x2=".2" y2="1"><stop offset="0" stop-color="#1a7a90"/><stop offset=".45" stop-color="#30a088"/><stop offset=".75" stop-color="#a8d050"/><stop offset="1" stop-color="#f0f030"/></linearGradient>
  <linearGradient id="mc" x1="0" y1="0" x2="0" y2="1"><stop offset="0" stop-color="#9ec4f8"/><stop offset=".6" stop-color="#4a80e0"/><stop offset="1" stop-color="#2a5ad0"/></linearGradient>
  <linearGradient id="silv" x1="0" y1="0" x2="0" y2="1"><stop offset="0" stop-color="#f0f2f4"/><stop offset="1" stop-color="#a8acb4"/></linearGradient>
  <linearGradient id="wmp" x1="0" y1="0" x2="1" y2="1"><stop offset="0" stop-color="#5ab8e0"/><stop offset=".5" stop-color="#58b0d0"/><stop offset="1" stop-color="#3a8ac0"/></linearGradient>
  <linearGradient id="net" x1="0" y1="0" x2="1" y2="1"><stop offset="0" stop-color="#8090a8"/><stop offset="1" stop-color="#3a4a60"/></linearGradient>
  <radialGradient id="wmpo" cx=".45" cy=".4" r=".6"><stop offset="0" stop-color="#ffb040"/><stop offset="1" stop-color="#f06010"/></radialGradient>
 </defs>
 <!-- start orb -->
 <circle cx="26.5" cy="748.4" r="18.6" fill="#0a2c58"/>
 <circle cx="26.5" cy="748.4" r="17.6" fill="url(#orb2)"/>
 <path d="M9.5 747 A17 17 0 0 1 43.5 747 Q26.5 743 9.5 747 Z" fill="url(#orbtop)"/>
 <path d="M17 738.5 Q22 735.5 28 738 L26.5 746.5 Q21.5 744.5 16 747 Z" fill="url(#fr)"/>
 <path d="M28.5 740 Q34 742 38.5 740.5 L37 749 Q32 750.5 27 748.5 Z" fill="url(#fg)"/>
 <path d="M15.5 747.8 Q20.5 745.5 26 747.5 L24 757 Q19 755 13.5 757.5 Z" fill="url(#fb)"/>
 <path d="M27 749 Q32 751 37 749.5 L35.5 758.5 Q30.5 760 24.8 758 Z" fill="url(#fy)"/>
 <!-- IE -->
 <ellipse cx="89.5" cy="746.5" rx="18" ry="6.6" transform="rotate(-42 89.5 746.5)" fill="none" stroke="#f0a810" stroke-width="2"/>
 <circle cx="90.5" cy="747.3" r="12.3" fill="url(#ieg)" stroke="#143a70" stroke-width="1"/>
 <ellipse cx="90.8" cy="743.8" rx="4.3" ry="2.2" fill="#eef4fa" stroke="#1c3c6c" stroke-width=".7"/>
 <path d="M86 750.8 H96.5 Q95.5 754.8 91.5 754.8 Q87 754.8 86 750.8 Z" fill="#eef4fa" stroke="#1c3c6c" stroke-width=".7"/>
 <path d="M96.5 750.8 H103.3 L102.6 755.5 Q99.5 753.5 96 753.8 Z" fill="#aec3dc"/>
 <path d="M76.1 758.5 A18 6.6 -42 0 1 102.9 734.5" fill="none" stroke="#f4b010" stroke-width="2.2"/>
 <path d="M74.5 757 A17 5.5 -42 0 1 96 736" fill="none" stroke="#f8f0a0" stroke-width="1.5" opacity=".45"/>
 <!-- explorer -->
 <path d="M133.5 736 Q133.5 735 134.5 735 H148 Q149 735 149.5 736 L150 740 H133.5 Z" fill="#f0d890" stroke="#c8a858" stroke-width=".7"/>
 <rect x="135.8" y="736" width="3" height="2" fill="#20c020"/><rect x="138.8" y="736.2" width="6" height="1.6" fill="#fff"/>
 <path d="M143 738 Q143 737 144 737 H162 Q163 737 163 738 V741 H143 Z" fill="#f0d890" stroke="#c8a858" stroke-width=".7"/>
 <rect x="144.2" y="738" width="3" height="2" fill="#e03020"/><rect x="147.2" y="738.2" width="6" height="1.6" fill="#fff"/>
 <path d="M150 740.5 Q150 739.5 151 739.5 H163 Q164 739.5 164 740.5 V743 H150 Z" fill="#f4dc98" stroke="#c8a858" stroke-width=".7"/>
 <rect x="152" y="740.3" width="3" height="2" fill="#2090f0"/><rect x="155" y="740.5" width="6" height="1.6" fill="#fff"/>
 <path d="M132.5 741.5 H149.5 L150.5 743.5 H163.5 V761.5 H132.5 Z" fill="url(#fold)" stroke="#c8a858" stroke-width=".8"/>
 <path d="M134 743 H149 L150 745 H162" stroke="#fff8e0" stroke-width=".8" fill="none"/>
 <path d="M136 763.5 V753.5 Q136 751.2 138.3 751.2 H157.7 Q160 751.2 160 753.5 V763.5 H153 V758 H143 V763.5 Z" fill="url(#stand)" stroke="#3a98d0" stroke-width="1"/>
 <path d="M138 752.5 H157" stroke="#e8f8ff" stroke-width="1" opacity=".8"/>
 <!-- WMP -->
 <rect x="222" y="738.5" width="3" height="22" fill="#8ad0ec" stroke="#2a70b0" stroke-width=".8"/>
 <rect x="199.5" y="737.3" width="21.5" height="23.5" rx="1" fill="url(#wmp)" stroke="#3a88c0" stroke-width=".7"/>
 <rect x="220.3" y="737.5" width="1.8" height="23.5" fill="#2a6aa8"/>
 <circle cx="209.6" cy="748.5" r="8.4" fill="url(#wmpo)"/>
 <path d="M205.8 743 L215.2 749 L205.8 755 Z" fill="#fff"/>
 <!-- media center -->
 <path d="M266.3 734.5 L286 738.2 L279 756.5 L258.5 752 Z" fill="#e8eef6" stroke="#9aa4b0" stroke-width=".8"/>
 <path d="M267.4 736.3 L284 739.4 L278 754.6 L260.6 750.8 Z" fill="url(#mc)"/>
 <g fill="#e4eefc" opacity=".75"><rect x="269" y="740" width="1.6" height="1.6"/><rect x="272" y="740.6" width="1.6" height="1.6"/><rect x="275" y="741.2" width="1.6" height="1.6"/><rect x="278" y="741.8" width="1.6" height="1.6"/><rect x="268" y="743" width="1.6" height="1.6"/><rect x="271" y="743.6" width="1.6" height="1.6"/><rect x="274" y="744.2" width="2.5" height="2.5" fill="#fff"/><rect x="277.5" y="744.8" width="1.6" height="1.6"/><rect x="270" y="746.5" width="1.6" height="1.6"/><rect x="273.5" y="747.2" width="1.6" height="1.6"/><rect x="277" y="747.8" width="1.6" height="1.6"/></g>
 <path d="M258 751.5 L276 755.5 L279.5 757 L285 758.5 L281.5 764 L276 762.5 L257.5 756.5 Z" fill="url(#silv)" stroke="#8a9098" stroke-width=".6"/>
 <circle cx="268.5" cy="754.2" r="3.4" fill="#f4f4f4" stroke="#8a9098" stroke-width=".8"/>
 <circle cx="268.5" cy="754.2" r="1.8" fill="#d8dade"/>
 <circle cx="271.5" cy="757.2" r=".9" fill="#f08020"/><circle cx="273.8" cy="757.8" r=".9" fill="#30c030"/>
 <!-- monitor -->
 <rect x="322.8" y="734.5" width="27.5" height="19" fill="#1a2a5c" stroke="#5a8ad0" stroke-width=".6"/>
 <rect x="324.5" y="736.2" width="23.5" height="15.5" fill="url(#scr)"/>
 <path d="M324.5 747 Q334 740 348 742.5 V744.5 Q336 742.5 324.5 750 Z" fill="#c8f0c0" opacity=".45"/>
 <path d="M324.5 738 Q336 737 348 740" stroke="#a0e0d8" stroke-width=".8" fill="none" opacity=".6"/>
 <path d="M334.5 753.5 H340 L341 758 H333.5 Z" fill="#a8c8e0"/>
 <ellipse cx="335.5" cy="759.8" rx="10.5" ry="2.2" fill="#3a7ac8"/>
 <ellipse cx="336.5" cy="759.3" rx="6" ry="1" fill="#8adcc8" opacity=".7"/>
 <path d="M342.5 735 L350 733.8 L351 741 L343.5 742 Z" fill="#f8ec98"/>
 <rect x="338" y="745" width="7.5" height="8" fill="#fafafa"/>
 <path d="M339.5 747.5 Q341.5 746 343.5 747.5 L344 752 H339.5 Z" fill="#e83018"/>
 <!-- wordpad big -->
 <path d="M408.5 736 L412.8 757.5 L406.5 758.5 Z" fill="#d8a838" stroke="#b08a30" stroke-width=".5"/>
 <path d="M389.5 733.5 L409.5 735.5 L405.5 762.8 L385 758.5 Z" fill="#fdfdfd" stroke="#b0b4bc" stroke-width=".8"/>
 <path d="M389.2 732 L409.8 734.2 L409.4 736.5 L389 734.3 Z" fill="#b0703c"/>
 <path d="M390.5 744.8 L395.5 737.8 L396.5 738 L395.5 745.2 M391.8 742.5 H395.8" stroke="#3434d0" stroke-width="1.5" fill="none"/>
 <g fill="#8a8ae8"><rect x="398" y="739.5" width="7" height="1" transform="rotate(6 398 739.5)"/><rect x="398" y="741.8" width="7" height="1" transform="rotate(6 398 741.8)"/><rect x="398" y="744" width="4" height="1" transform="rotate(6 398 744)"/></g>
 <path d="M389.8 745.2 L404.5 746.8 L404.3 748 L389.6 746.4 Z" fill="#50a898"/>
 <g fill="#a8acb8"><rect x="389" y="748.5" width="14" height=".8" transform="rotate(6 389 748.5)"/><rect x="389" y="750.5" width="6" height=".8" transform="rotate(6 389 750.5)"/><rect x="388.5" y="752.5" width="6" height=".8" transform="rotate(6 388.5 752.5)"/><rect x="388" y="754.5" width="6" height=".8" transform="rotate(6 388 754.5)"/><rect x="387" y="756.5" width="14" height=".8" transform="rotate(6 387 756.5)"/></g>
 <path d="M397.2 750 L404 750.7 L403.3 756.6 L396.6 755.9 Z" fill="#4a8ac0"/>
 <path d="M396.8 753.5 Q400 752.5 403.6 754 L403.3 756.6 L396.6 755.9 Z" fill="#2a5a38"/>
 <!-- tray -->
 <path d="M861.3 750.8 L865.5 746.3 L869.7 750.8 Z" fill="#eef2f8" stroke="#2a3850" stroke-width=".6"/>
 <rect x="882.3" y="741.5" width="1.6" height="15" fill="#fff" stroke="#3a4a60" stroke-width=".4"/>
 <path d="M884 742.5 Q887 741.5 890 742.5 L891 744.5 Q894 743.5 897 745 V749 Q894 748 891 749 L890 747 Q887 746 884 748.5 Z" fill="#f4f6f8"/>
 <circle cx="893" cy="752" r="4.4" fill="#d81818" stroke="#f0d0d0" stroke-width=".7"/>
 <path d="M891.2 750.2 L894.8 753.8 M894.8 750.2 L891.2 753.8" stroke="#fff" stroke-width="1.4"/>
 <rect x="910.5" y="743.8" width="11" height="9.2" fill="#f4f4f4"/>
 <rect x="911.8" y="745" width="8.5" height="6.8" fill="url(#net)"/>
 <rect x="914.5" y="753" width="3" height="1.6" fill="#f0f0f0"/>
 <rect x="911" y="754.6" width="10" height="1.6" fill="#f0f0f0"/>
 <path d="M907.5 741 V745.5 Q907.5 747.2 909.5 747.2 Q911.5 747.2 911.5 745.5 V741 M909.5 741 V745 M909.5 747 V757" fill="none" stroke="#fff" stroke-width="1.2"/>
</svg>
<div class="t" style="left:830px;top:740px;color:#fff">EN</div>
<div class="t" style="left:955px;top:734px;color:#fff;font-size:11.5px">10:51</div>
<div class="t" style="left:940px;top:751px;color:#fff;font-size:11.5px;letter-spacing:.05px">23/02/2009</div>
</body></html>
